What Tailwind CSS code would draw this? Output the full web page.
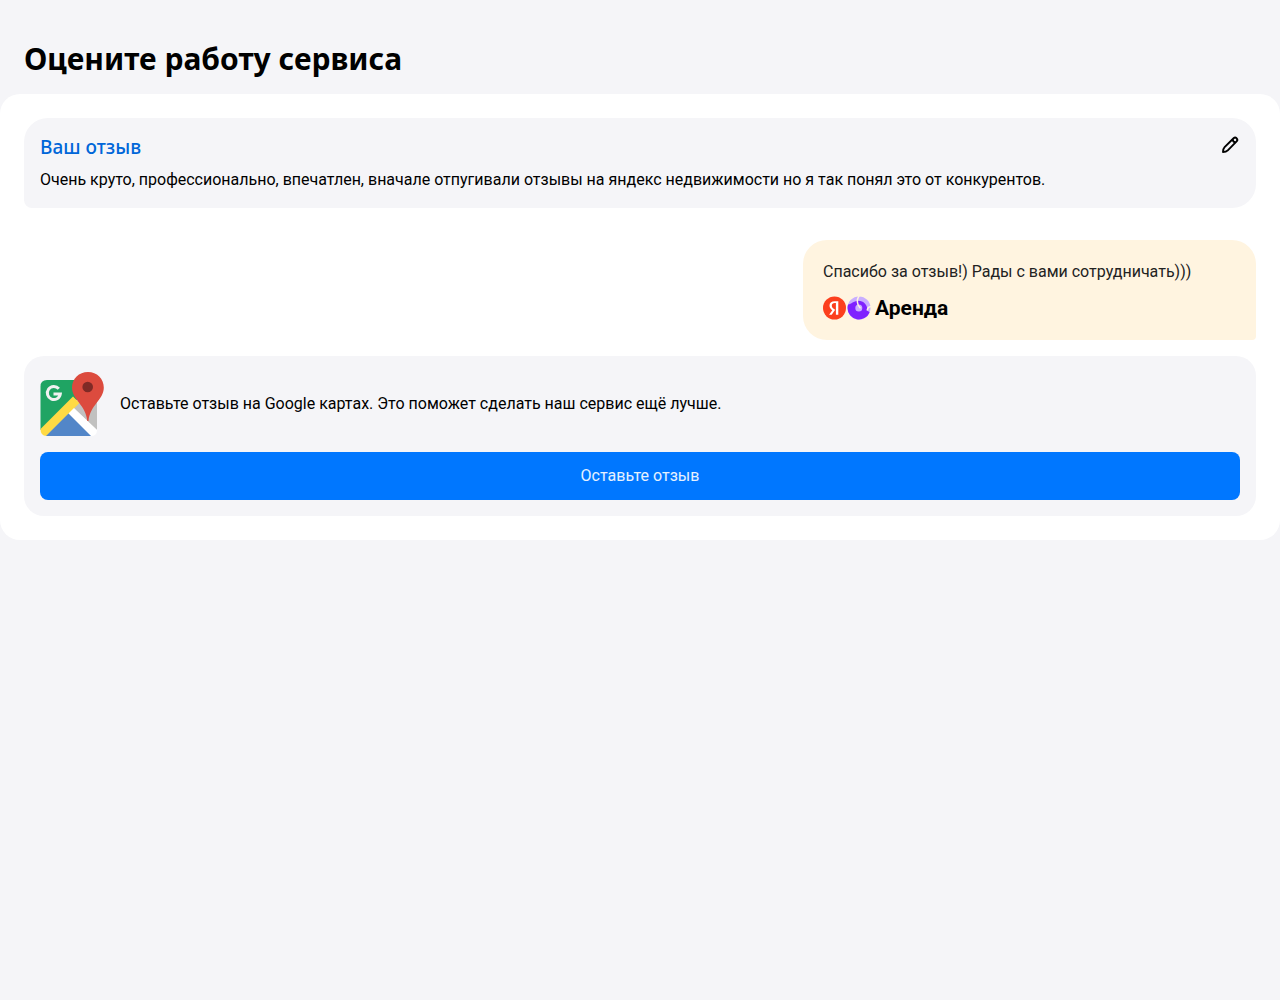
<!DOCTYPE html>
<html lang="ru">
<head>
<meta charset="utf-8">
<meta name="viewport" content="width=device-width, initial-scale=1">
<title>Оцените работу сервиса</title>
<script src="https://cdn.jsdelivr.net/npm/@tailwindcss/browser@4"></script>
</head>
<body class="min-h-screen bg-[#f5f5f8] font-[Roboto,sans-serif] text-base text-black">
<main class="pt-10">
  <h1 class="px-6 font-['Noto_Sans',sans-serif] text-[30px] leading-[38px] font-bold">Оцените работу сервиса</h1>
  <div class="mt-4 flex flex-col rounded-[20px] bg-white p-6">
    <section class="flex flex-col gap-2 rounded-3xl rounded-bl-lg bg-[#f5f5f8] p-4">
      <div class="flex items-start justify-between">
        <h2 class="font-['Noto_Sans',sans-serif] text-[19px] leading-[26px] font-medium text-[#0066d9]">Ваш отзыв</h2>
        <button type="button" aria-label="Редактировать отзыв" class="flex size-5 items-center justify-center">
          <svg class="size-5" viewBox="0 0 20 20" fill="none" stroke="#000" stroke-width="1.900" stroke-linejoin="round"><path d="M3 18C3 15.500 3.400 14.300 4.600 13.100L13.600 4.300a2.200 2.200 0 0 1 3 0 2.200 2.200 0 0 1 0 3.100L7.800 16.300C6.600 17.500 5.500 18 3 18Z"/><path d="M12.600 5.400c.2 1.700 1.200 2.800 2.900 3"/></svg>
        </button>
      </div>
      <p class="leading-6">Очень круто, профессионально, впечатлен, вначале отпугивали отзывы на яндекс недвижимости но я так понял это от конкурентов.</p>
    </section>
    <section class="mt-8 flex w-[453px] max-w-full flex-col gap-3 self-end rounded-3xl rounded-br-sm bg-[#fff4e0] p-5">
      <p class="leading-6 text-[#222]">Спасибо за отзыв!) Рады с вами сотрудничать)))</p>
      <div class="flex h-6 items-center">
        <svg class="h-6 w-12" viewBox="0 0 48 24" aria-hidden="true">
          <circle cx="11.500" cy="12" r="11.500" fill="#fc3f1d"/>
          <path fill="#fff" d="M15.300 18.800h-2.400V7h-1.100c-2 0-3 1-3 2.500 0 1.700.7 2.500 2.200 3.500l1.200.8-3.500 5H6.100l3.200-4.600c-1.800-1.300-2.800-2.500-2.800-4.600 0-2.600 1.800-4.400 5.300-4.400h3.500z"/>
          <circle cx="36" cy="12" r="11.500" fill="#c9aeff"/>
          <path fill="#7f22ff" d="M25.100 8.600C28.400 8.300 30.500 5 35 4.800c5.800-.1 9.200 4.200 9.200 8.400 0 1.800 1 1.800 2.400 3.200A11.500 11.500 0 0 1 24.500 12q0-1.800.6-3.400Z"/>
          <circle cx="35.800" cy="12" r="3.500" fill="#c9aeff"/>
          <path fill="none" stroke="#fff4e0" stroke-width="1.500" stroke-linecap="round" d="M36 0C33.600 3.500 33.800 8.500 37 11.800M48 10.500c-2.200.2-3.400 1.400-3.700 3.400"/>
        </svg>
        <span class="ml-1 text-[21px] leading-6 font-bold">Аренда</span>
      </div>
    </section>
    <section class="mt-4 flex flex-col gap-4 rounded-[20px] bg-[#f5f5f8] p-4">
      <div class="flex items-center gap-4">
        <svg class="size-16 shrink-0" viewBox="0 0 64 64" aria-hidden="true">
          <path fill="#1fa463" d="M7 8h33v17L.500 58V14.500Q.500 8 7 8Z"/>
          <path fill="#c1c1c0" d="M35 30 57 16v42L33 36Z"/>
          <path fill="#ffda44" d="M.500 57 33 24.500 39.500 31 6.500 64Q.500 64 .500 57Z"/>
          <path fill="#fff" d="M28.500 41.500 34 36 57 58Q57 64 51 64Z"/>
          <path fill="#5286c8" d="M6 64 28.500 41.500 51 64Z"/>
          <path fill="#dc4b3e" d="M48 0c9 0 15.800 6.800 15.800 15.600C63.800 28 50 33 48.500 49h-1.200C46 33 32 28 32 15.600 32 6.800 39 0 48 0Z"/>
          <circle cx="47.700" cy="15" r="5.300" fill="#7f2a26"/>
          <path fill="none" stroke="#f1f1f1" stroke-width="3" d="M18.800 16.800a6.500 6.500 0 1 0 1.500 5.200H13.500"/>
        </svg>
        <p class="leading-6">Оставьте отзыв на Google картах. Это поможет сделать наш сервис ещё лучше.</p>
      </div>
      <button type="button" class="h-12 w-full rounded-lg bg-[#0077ff] text-white/90">Оставьте отзыв</button>
    </section>
  </div>
</main>
</body>
</html>
